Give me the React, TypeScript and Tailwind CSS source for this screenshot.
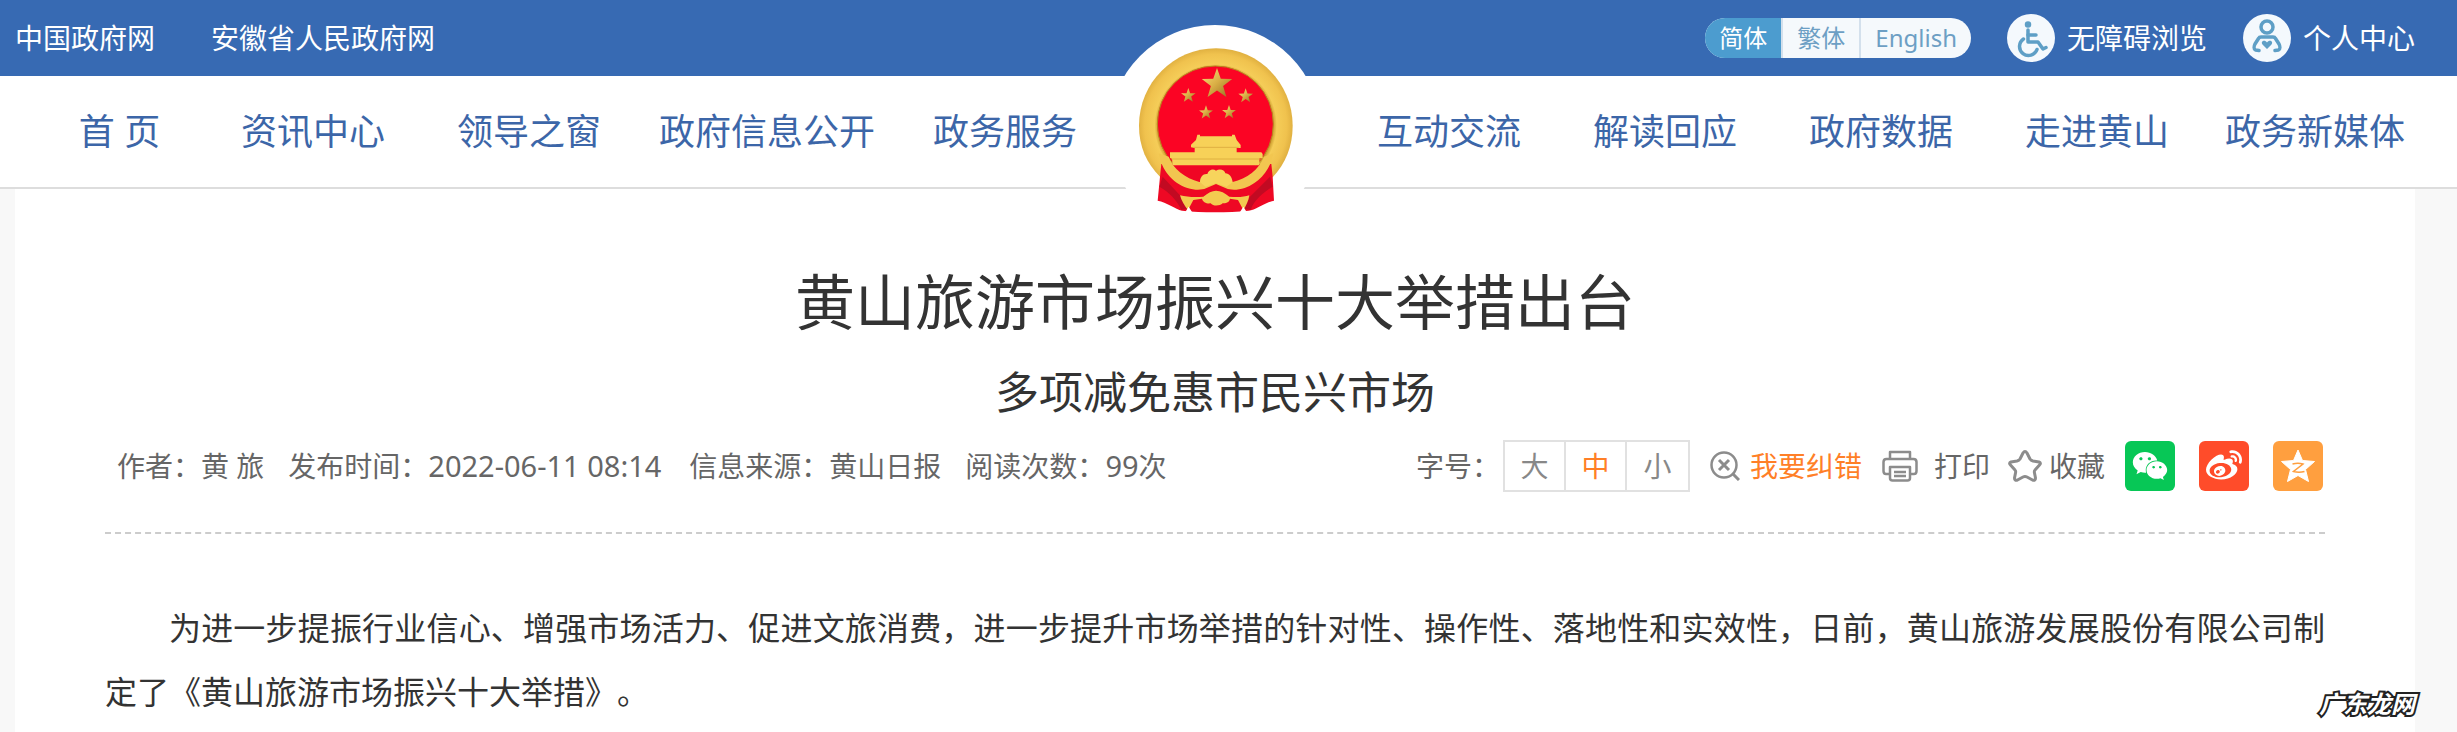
import {useState} from "react";
import type {ReactNode} from "react";
import {FaWeixin, FaWeibo} from "react-icons/fa6";

const leftNav = ["首 页", "资讯中心", "领导之窗", "政府信息公开", "政务服务"];
const rightNav = ["互动交流", "解读回应", "政府数据", "走进黄山", "政务新媒体"];

const star = (cx: number, cy: number, r: number) =>
    Array.from({length: 10}, (_, i) => {
        const a = (Math.PI / 5) * i - Math.PI / 2;
        const d = i % 2 ? r * 0.4 : r;
        return `${(cx + d * Math.cos(a)).toFixed(1)},${(cy + d * Math.sin(a)).toFixed(1)}`;
    }).join(" ");

function Emblem() {
    return (
        <svg viewBox="27 45 636 636" className="h-[212px] w-[212px]" role="img" aria-label="国徽">
            <defs>
                <radialGradient id="gold" cx="347" cy="346" r="232" gradientUnits="userSpaceOnUse">
                    <stop offset="0.74" stopColor="#c99a2c" />
                    <stop offset="0.79" stopColor="#f5cd58" />
                    <stop offset="0.92" stopColor="#f0c24e" />
                    <stop offset="1" stopColor="#e0b040" />
                </radialGradient>
                <linearGradient id="starGold" x1="0" y1="0" x2="1" y2="1">
                    <stop offset="0" stopColor="#ffe27a" />
                    <stop offset="0.5" stopColor="#d9ae45" />
                    <stop offset="1" stopColor="#8f6a22" />
                </linearGradient>
            </defs>
            <circle cx="345" cy="363" r="318" fill="#fff" />
            <path d="M348 115C476 115 578 219 578 347C578 410 556 460 518 502L180 500C140 460 117 410 117 347C117 219 220 115 348 115Z" fill="url(#gold)" />
            <path d="M184 462L180 500L173 572C200 576 226 598 246 602C310 608 380 608 446 602C466 600 492 578 522 572L518 500L514 462Z" fill="#ee0824" />
            <path d="M178 530C205 545 232 570 244 600L262 596L244 560L188 500ZM518 530C490 548 462 570 452 600L432 596L450 560L510 500Z" fill="#c20a22" />
            <ellipse cx="346" cy="342" rx="174" ry="174" fill="#fb0424" stroke="#b9831f" strokeWidth="3" />
            <path d="M210 466L484 466C470 500 440 518 400 530L296 530C250 518 222 496 210 466Z" fill="#f00624" />
            <path d="M176 430C184 478 216 520 262 534C284 541 304 541 318 535L348 522L378 535C392 541 412 541 434 534C480 518 512 478 520 430L492 440C478 478 440 506 398 516L348 505L298 516C256 504 218 476 206 440Z" fill="#f2c650" />
            <path d="M300 516C300 500 310 490 322 492C326 480 338 475 348 482C360 474 374 480 376 490C388 490 396 502 398 516L380 530L348 520L316 530Z" fill="#f7d45c" />
            <path d="M240 556C262 562 290 562 310 560C324 548 336 542 348 542C362 542 374 548 388 560C408 562 432 562 448 556C446 572 438 588 430 600L414 570L390 566C388 578 376 580 368 580C360 588 340 590 332 580C320 582 308 576 306 566L280 570L264 600C254 588 244 572 240 556Z" fill="#f3cb50" />
            <path d="M256 606L266 590L276 606ZM420 606L430 590L440 606Z" fill="#fff" />
            <path d="M292 374L300 374L300 379L396 379L396 374L404 374L410 390L422 405L422 414L410 414L410 427L484 427L488 432L488 445L478 445L478 466L218 466L216 446L210 444L210 427L284 427L284 414L273 412L273 404L288 390Z" fill="#f7d158" />
            <path d="M280 412L416 412M214 447L482 447" stroke="#dfb041" strokeWidth="3" fill="none" />
            <g fill="url(#starGold)">
                <polygon points={star(351, 222, 48)} />
                <polygon points={star(265, 257, 23)} />
                <polygon points={star(437, 258, 23)} />
                <polygon points={star(318, 308, 22)} />
                <polygon points={star(387, 307, 22)} />
            </g>
        </svg>
    );
}

function WheelchairIcon() {
    return (
        <svg viewBox="0 0 48 48" className="size-12" aria-hidden="true">
            <circle cx="24" cy="24" r="24" fill="#f4f9fd" />
            <g fill="none" stroke="#5e9fc6" strokeWidth="3.500" strokeLinecap="round" strokeLinejoin="round">
                <circle cx="21" cy="10.500" r="1.500" fill="#5e9fc6" />
                <path d="M21 16V28H31L36 35L39 33.500" />
                <path d="M21 21H29" />
                <path d="M16.500 25A9 9 0 1 0 30 35.500" />
            </g>
        </svg>
    );
}

function PersonIcon() {
    return (
        <svg viewBox="0 0 48 48" className="size-12" aria-hidden="true">
            <circle cx="24" cy="24" r="24" fill="#f4f9fd" />
            <g fill="none" stroke="#5e9fc6" strokeWidth="3.500" strokeLinecap="round" strokeLinejoin="round">
                <circle cx="24" cy="13" r="6" />
                <path d="M16 36.500L12.500 36C10.500 35 11 32 12 30L15.500 24.500C16 23.500 17 23 18 23H30C31 23 32 23.500 32.500 24.500L36 30C37 32 37.500 35 35.500 36L32 36.500" />
            </g>
            <path d="M24 35L19.500 30.500C17 27 22 25 24 28.500C26 25 31 27 28.500 30.500Z" fill="#5e9fc6" />
        </svg>
    );
}

function CorrectIcon() {
    return (
        <svg viewBox="0 0 30 30" className="size-[30px]" fill="none" stroke="#8c8c8c" strokeWidth="2.500" aria-hidden="true">
            <circle cx="14" cy="14" r="12.500" />
            <path d="M9 9L19 19M19 9L9 19M23 23L29 29" strokeWidth="3" />
        </svg>
    );
}

function PrintIcon() {
    return (
        <svg viewBox="0 0 36 32" className="h-8 w-9" fill="none" stroke="#8c8c8c" strokeWidth="2.500" strokeLinejoin="round" aria-hidden="true">
            <path d="M8 9V2H28V9" />
            <path d="M8 24H4Q1.500 24 1.500 21V12Q1.500 9 4.500 9H31.500Q34.500 9 34.500 12V21Q34.500 24 32 24H28" />
            <path d="M8 17H28V28Q28 30.500 25.500 30.500H10.500Q8 30.500 8 28ZM12 22H24M12 26H24" />
        </svg>
    );
}

function StarIcon() {
    return (
        <svg viewBox="0 0 34 32" className="h-8 w-[34px]" fill="none" stroke="#8c8c8c" strokeWidth="3" strokeLinejoin="round" aria-hidden="true">
            <path d="M15 3Q17 0 19 3L22 9Q23 10.500 25 11L31 12Q33.500 13 31.500 15L27 20Q26 21 26.500 23L27.500 28Q27.500 31 24.500 30L19 27Q17 26 15 27L9.500 30Q6.500 31 6.500 28L7.500 23Q8 21 7 20L2.500 15Q.5 13 3 12L9 11Q11 10.500 12 9Z" />
        </svg>
    );
}

function QzoneIcon() {
    return (
        <svg viewBox="0 0 34 34" className="size-[34px]" aria-hidden="true">
            <path d="M17 1L21.500 11.500L33.500 12.500L24.500 20.500L27.500 32.500L17 26.500L6.500 32.500L9.500 20.500L.5 12.500L12.500 11.500Z" fill="#fff" stroke="#fff" strokeLinejoin="round" />
            <path d="M11.500 15Q17 13.500 22 15L12.500 22.500Q18 24 23.500 22.500" fill="none" stroke="#ff9f3f" strokeWidth="1.500" />
        </svg>
    );
}

type ShareButtonProps = {
    label: string;
    className: string;
    children: ReactNode;
}

function ShareButton({label, className, children}: ShareButtonProps) {
    return (
        <button aria-label={label} className={`flex size-[50px] items-center justify-center rounded-md text-white ${className}`}>
            {children}
        </button>
    )
}

function TopBar() {
    const [lang, setLang] = useState("简体");

    return (
        <div className="flex h-[76px] items-center justify-between bg-[#376ab3] pr-[42px] pl-[15px] text-[28px] text-white">
            <div className="flex gap-14">
                <a href="#">中国政府网</a>
                <a href="#">安徽省人民政府网</a>
            </div>
            <div className="flex items-center gap-9">
                <div className="flex h-10 divide-x-2 divide-[#d3e0ec] overflow-hidden rounded-full bg-[#f5f9fc] text-2xl">
                    {["简体", "繁体", "English"].map((name) => (
                        <button
                            key={name}
                            onClick={() => setLang(name)}
                            className={`flex items-center px-[14px] ${lang === name ? "bg-[#4c9ccf] text-white" : "text-[#6d9fc4]"}`}>
                            {name}
                        </button>
                    ))}
                </div>
                <a href="#" className="flex items-center gap-3"><WheelchairIcon />无障碍浏览</a>
                <a href="#" className="flex items-center gap-3"><PersonIcon />个人中心</a>
            </div>
        </div>
    )
}

function MainNav() {
    return (
        <nav className="grid h-[113px] grid-cols-[171fr_216fr_216fr_260fr_216fr_228fr_216fr_216fr_216fr_216fr_220fr] items-center border-b-2 border-[#ddd] bg-white pr-8 pl-[34px] text-center text-4xl text-[#3c66a8]">
            {leftNav.map((item) => <a key={item} href="#" className="whitespace-nowrap">{item}</a>)}
            <div className="relative h-full">
                <div className="absolute -top-[51px] -left-1">
                    <Emblem />
                </div>
            </div>
            {rightNav.map((item) => <a key={item} href="#" className="whitespace-nowrap">{item}</a>)}
        </nav>
    )
}

function ArticleMeta() {
    const [size, setSize] = useState("中");

    return (
        <div className="flex items-center justify-between border-b-2 border-dashed border-[#ccc] pr-0.5 pb-10 pl-3 text-[28px] text-[#666]">
            <div className="flex items-center gap-6 whitespace-nowrap">
                <span>作者：黄 旅</span>
                <span>发布时间：<time className="mr-1 text-[29px]">2022-06-11 08:14</time></span>
                <span>信息来源：黄山日报</span>
                <span>阅读次数：<span className="text-[29px]">99</span>次</span>
            </div>
            <div className="flex items-center whitespace-nowrap">
                <span>字号：</span>
                <div className="mr-5 ml-[3px] flex divide-x-2 divide-[#e1e1e1] border-2 border-[#e1e1e1]">
                    {["大", "中", "小"].map((name) => (
                        <button
                            key={name}
                            onClick={() => setSize(name)}
                            className={`h-12 w-[61px] leading-[48px] ${size === name ? "text-[#ff7f27]" : "text-[#888]"}`}>
                            {name}
                        </button>
                    ))}
                </div>
                <button className="mr-5 flex items-center gap-[10px] text-[#ff7f27]"><CorrectIcon />我要纠错</button>
                <button className="mr-[18px] flex items-center gap-4"><PrintIcon />打印</button>
                <button className="mr-5 flex items-center gap-[7px]"><StarIcon />收藏</button>
                <div className="flex gap-6">
                    <ShareButton label="微信" className="bg-[#07c756]"><FaWeixin className="size-9" /></ShareButton>
                    <ShareButton label="微博" className="bg-[#ff4c2a]"><FaWeibo className="size-9" /></ShareButton>
                    <ShareButton label="QQ空间" className="bg-[#ff9f3f]"><QzoneIcon /></ShareButton>
                </div>
            </div>
        </div>
    )
}

export default function App() {
    return (
        <div className="relative flex min-h-screen flex-col bg-[#f8f8f8] font-['Noto_Sans','Noto_Sans_CJK_SC',sans-serif] [text-spacing-trim:space-all]">
            <header>
                <TopBar />
                <MainNav />
            </header>
            <main className="mr-[42px] ml-[15px] grow bg-white px-[90px] pt-[69px] text-[#333]">
                <h1 className="text-center text-[60px] leading-[88px]">黄山旅游市场振兴十大举措出台</h1>
                <h2 className="pt-4 pb-[18px] text-center text-[44px] leading-[60px]">多项减免惠市民兴市场</h2>
                <ArticleMeta />
                <p className="pt-[62px] text-justify indent-[2em] text-[32px] leading-[64px]">
                    为进一步提振行业信心、增强市场活力、促进文旅消费，进一步提升市场举措的针对性、操作性、落地性和实效性，日前，黄山旅游发展股份有限公司制定了《黄山旅游市场振兴十大举措》。
                </p>
            </main>
            <div className="absolute right-[42px] bottom-3 text-2xl font-bold text-white italic [-webkit-text-stroke:4px_#222] [paint-order:stroke_fill]">
                广东龙网
            </div>
        </div>
    )
}
